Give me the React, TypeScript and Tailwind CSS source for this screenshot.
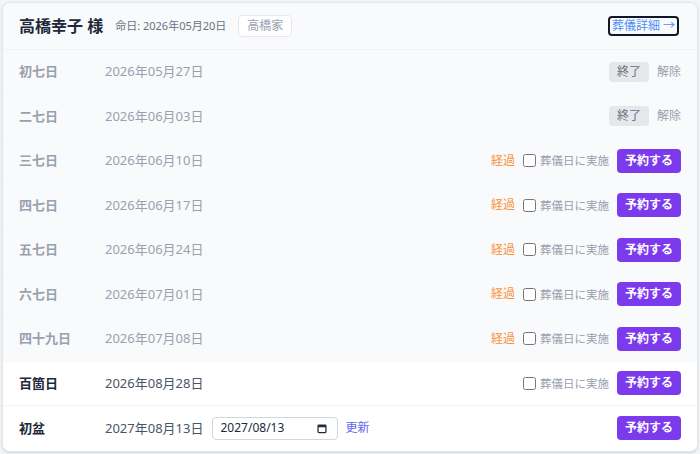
import { useState } from 'react'

interface Memorial {
  name: string
  date: string
  done?: boolean
  past?: boolean
  withFuneral?: boolean
  editable?: string
}

const memorials: Memorial[] = [
  { name: '初七日', date: '2026年05月27日', done: true, past: true },
  { name: '二七日', date: '2026年06月03日', done: true, past: true },
  { name: '三七日', date: '2026年06月10日', past: true, withFuneral: true },
  { name: '四七日', date: '2026年06月17日', past: true, withFuneral: true },
  { name: '五七日', date: '2026年06月24日', past: true, withFuneral: true },
  { name: '六七日', date: '2026年07月01日', past: true, withFuneral: true },
  { name: '四十九日', date: '2026年07月08日', past: true, withFuneral: true },
  { name: '百箇日', date: '2026年08月28日', withFuneral: true },
  { name: '初盆', date: '2027年08月13日', editable: '2027/08/13' },
]

const font = { fontFamily: '"Noto Sans", "Noto Sans CJK JP", sans-serif' }

function CalendarIcon() {
  return (
    <svg width="11" height="11" viewBox="0 0 12 12" className="text-gray-800">
      <rect x="1.25" y="2" width="9.5" height="9" rx="1" fill="none" stroke="currentColor" strokeWidth="1.5" />
      <rect x="1.25" y="2" width="9.5" height="2.5" fill="currentColor" />
    </svg>
  )
}

function Row({ item }: { item: Memorial }) {
  const [checked, setChecked] = useState(false)
  const [value, setValue] = useState(item.editable ?? '')

  return (
    <div
      className={`flex h-[44.5px] items-center px-4 border-b last:border-b-0 ${
        item.past ? 'bg-gray-50 border-[#f7f8f9]' : 'bg-white border-[#f3f4f6]'
      }`}
    >
      <div className={`w-[86px] text-[13px] font-bold ${item.past ? 'text-gray-400' : 'text-gray-800'}`}>
        {item.name}
      </div>
      <div className={`text-[13px] ${item.past ? 'text-gray-400' : 'text-gray-600'}`}>{item.date}</div>

      {item.editable && (
        <div className="ml-2 flex items-center gap-2">
          <div className="flex h-[23px] w-[126px] items-center rounded border border-gray-300 bg-white pl-2 pr-2.5">
            <input
              type="text"
              value={value}
              onChange={(e) => setValue(e.target.value)}
              className="w-full bg-transparent text-xs text-gray-800 outline-none"
            />
            <CalendarIcon />
          </div>
          <button className="text-xs text-[#6366f1]">更新</button>
        </div>
      )}

      <div className="ml-auto flex items-center">
        {item.done ? (
          <>
            <span className="rounded bg-gray-200 px-2 py-0.5 text-xs text-gray-500">終了</span>
            <button className="ml-2 text-xs text-gray-400">解除</button>
          </>
        ) : (
          <>
            {item.past && <span className="mr-2 text-xs text-[#fb923c]">経過</span>}
            {item.withFuneral && (
              <label className="mr-2 flex items-center gap-1 text-[11.5px] text-gray-400">
                <input
                  type="checkbox"
                  checked={checked}
                  onChange={(e) => setChecked(e.target.checked)}
                  className="h-[13px] w-[13px] accent-[#7c3aed]"
                />
                葬儀日に実施
              </label>
            )}
            <button className="h-6 rounded bg-[#7c3aed] px-2 text-xs font-bold text-white">予約する</button>
          </>
        )}
      </div>
    </div>
  )
}

export default function App() {
  return (
    <div className="min-h-screen bg-gray-100 p-[2px]" style={font}>
      <div className="overflow-hidden rounded-lg border border-gray-200 bg-white shadow-sm">
        {/* ヘッダー */}
        <div className="flex h-[47px] items-center border-b border-[#f1f2f4] bg-gray-50 px-4">
          <h2 className="text-base font-bold text-gray-800">高橋幸子 様</h2>
          <span className="ml-3 text-[11px] text-gray-500">命日: 2026年05月20日</span>
          <span className="ml-3 rounded border border-gray-200 bg-white px-2 py-0.5 text-xs text-gray-400">
            高橋家
          </span>
          <a
            href="#"
            className="ml-auto mr-0.5 rounded border-2 border-gray-900 px-0.5 text-xs text-[#4f8ef7]"
          >
            葬儀詳細 →
          </a>
        </div>

        {/* 法要一覧 */}
        {memorials.map((m) => (
          <Row key={m.name} item={m} />
        ))}
      </div>
    </div>
  )
}
